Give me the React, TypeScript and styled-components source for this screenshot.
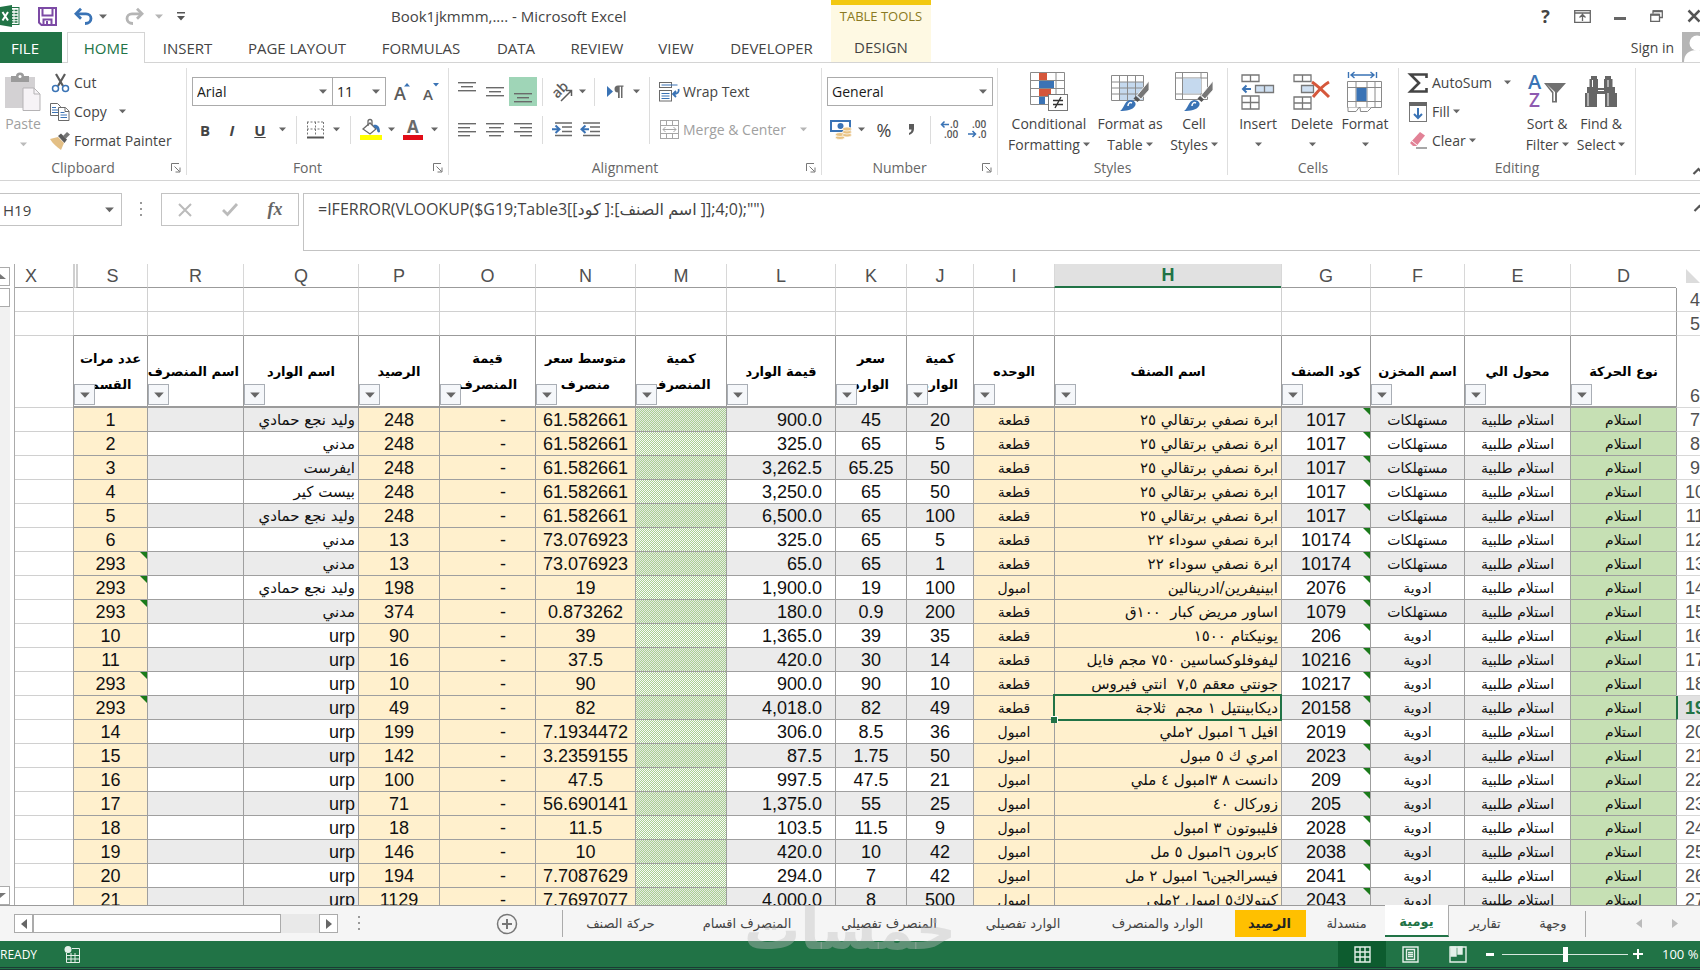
import React from "react";
import styled, { createGlobalStyle, css } from "styled-components";

const UI = `"Open Sans", "Noto Sans", "DejaVu Sans", sans-serif`;
const CELL = `"Liberation Sans", "DejaVu Sans", sans-serif`;
const GREEN = "#217346";
const LINE = "#d4d4d4";
const INK = "#444";

const Global = createGlobalStyle`
  *, *::before, *::after { box-sizing: border-box; }
  html, body { margin: 0; overflow: hidden; }
  body { background: #fff; color: ${INK}; font-family: ${UI}; font-size: 14px; }
  button, input, select, textarea { font: inherit; color: inherit; margin: 0; }
  button { border: 0; background: none; padding: 0; cursor: pointer; }
  svg { display: block; flex: none; overflow: visible; }
`;

/* ---------- shell ---------- */

const Shell = styled.div`
  display: flex;
  flex-direction: column;
  height: 100vh;
  overflow: hidden;
`;

const TitleBar = styled.header`
  display: flex;
  height: 32px;
  flex: none;
`;
const QuickAccess = styled.div`
  display: flex;
  align-items: center;
  width: 391px;
`;
const Title = styled.h1`
  margin: 0;
  width: 440px;
  font-size: 15px;
  font-weight: 400;
  line-height: 32px;
  white-space: nowrap;
`;
const ContextTitle = styled.div`
  width: 100px;
  border-top: 5px solid #f2c811;
  background: #fef9e3;
  color: #8a7a22;
  font-size: 13px;
  line-height: 22px;
  text-align: center;
  white-space: nowrap;
`;
const WindowControls = styled.div`
  display: flex;
  align-items: center;
  margin-left: auto;
  margin-right: -12px;
`;

const Slot = styled.button<{ $w: number; $on?: boolean; $h?: number }>`
  display: flex;
  align-items: center;
  justify-content: center;
  flex: none;
  width: ${(p) => p.$w}px;
  height: ${(p) => p.$h ?? 28}px;
  background: ${(p) => (p.$on ? "#9fd5b7" : "none")};
`;

const TabRow = styled.nav`
  display: flex;
  height: 31px;
  flex: none;
  border-bottom: 1px solid ${LINE};
`;
const Tab = styled.button<{ $w: number; $kind?: "file" | "active" | "context" }>`
  width: ${(p) => p.$w}px;
  flex: none;
  height: 31px;
  font-size: 15px;
  line-height: 24px;
  white-space: nowrap;
  ${(p) =>
    p.$kind === "file" &&
    css`
      background: ${GREEN};
      color: #fff;
      padding-right: 12px;
      margin-right: 5px;
    `}
  ${(p) =>
    p.$kind === "active" &&
    css`
      color: ${GREEN};
      background: #fff;
      border: 1px solid ${LINE};
      border-bottom: 0;
    `}
  ${(p) =>
    p.$kind === "context" &&
    css`
      background: #fef9e3;
      height: 30px;
    `}
`;
const SignIn = styled.a`
  display: flex;
  align-items: center;
  gap: 8px;
  height: 30px;
  margin-left: auto;
  margin-right: -12px;
  color: ${INK};
  text-decoration: none;
  white-space: nowrap;
`;

/* ---------- ribbon ---------- */

const Ribbon = styled.section`
  display: flex;
  flex: none;
  height: 118px;
  padding-top: 5px;
  border-bottom: 1px solid ${LINE};
`;
const Group = styled.div<{ $w: number }>`
  display: flex;
  flex-direction: column;
  flex: none;
  width: ${(p) => p.$w}px;
  height: 107px;
  border-right: 1px solid #dedede;
`;
const GroupBody = styled.div<{ $pad: number }>`
  display: flex;
  flex: 1;
  padding-left: ${(p) => p.$pad}px;
`;
const GroupLabel = styled.div`
  display: flex;
  align-items: center;
  height: 14px;
  color: #666;
  line-height: 14px;
  span {
    flex: 1;
    text-align: center;
  }
`;
const Stack = styled.div<{ $gap?: number; $top?: number }>`
  display: flex;
  flex-direction: column;
  gap: ${(p) => p.$gap ?? 0}px;
  padding-top: ${(p) => p.$top ?? 0}px;
`;
const Line = styled.div`
  display: flex;
  align-items: center;
  height: 29px;
`;
const Divider = styled.i<{ $w: number; $h?: number }>`
  flex: none;
  width: ${(p) => p.$w}px;
  height: ${(p) => p.$h ?? 28}px;
  background: linear-gradient(#dcdcdc, #dcdcdc) center / 1px 100% no-repeat;
`;
const Command = styled.button<{ $dim?: boolean }>`
  display: flex;
  align-items: center;
  height: 29px;
  line-height: 24px;
  white-space: nowrap;
  color: ${(p) => (p.$dim ? "#a0a0a0" : INK)};
`;
const BigButton = styled.button<{ $w: number; $dim?: boolean }>`
  display: flex;
  flex-direction: column;
  align-items: center;
  flex: none;
  width: ${(p) => p.$w}px;
  padding-top: 4px;
  color: ${(p) => (p.$dim ? "#a0a0a0" : INK)};
  line-height: 20px;
  white-space: nowrap;
`;
const BigIcon = styled.span`
  display: flex;
  align-items: center;
  height: 39px;
  margin-bottom: 3px;
`;
const Second = styled.span`
  display: flex;
  align-items: center;
  gap: 3px;
  height: 21px;
`;
const SelectWrap = styled.label<{ $w: number }>`
  position: relative;
  display: block;
  flex: none;
  width: ${(p) => p.$w}px;
  height: 29px;
  & + & {
    margin-left: -1px;
  }
  svg {
    position: absolute;
    right: 6px;
    top: 12px;
    pointer-events: none;
  }
`;
const Select = styled.select`
  appearance: none;
  width: 100%;
  height: 100%;
  padding: 0 4px;
  border: 1px solid #ababab;
  border-radius: 0;
  background: #fff;
  color: #1a1a1a;
`;
const Glyph = styled.span<{ $bold?: boolean; $italic?: boolean; $under?: boolean; $size?: number }>`
  font-family: ${UI};
  font-size: ${(p) => p.$size ?? 15}px;
  font-weight: ${(p) => (p.$bold ? 700 : 400)};
  font-style: ${(p) => (p.$italic ? "italic" : "normal")};
  text-decoration: ${(p) => (p.$under ? "underline" : "none")};
  line-height: 24px;
`;
const FxGlyph = styled.em`
  font-family: "Liberation Serif", serif;
  font-size: 18px;
  font-weight: 700;
  color: #666;
`;
const Collapse = styled.button`
  align-self: flex-end;
  margin-left: auto;
  margin-bottom: 2px;
  width: 8px;
  height: 14px;
`;

/* ---------- formula bar ---------- */

const FormulaBar = styled.section`
  display: flex;
  flex: none;
  height: 83px;
  padding-top: 12px;
`;
const NameBox = styled.div`
  display: flex;
  align-items: center;
  width: 122px;
  height: 33px;
  border: 1px solid #c3c3c3;
  border-left: 0;
  input {
    flex: 1;
    min-width: 0;
    height: 100%;
    border: 0;
    padding: 0 3px;
    outline: 0;
    font-size: 15px;
  }
`;
const Grip = styled.i<{ $w: number }>`
  display: flex;
  align-items: center;
  justify-content: center;
  flex: none;
  width: ${(p) => p.$w}px;
  height: 33px;
`;
const FormulaButtons = styled.div`
  display: flex;
  align-items: center;
  width: 138px;
  height: 33px;
  margin-right: 4px;
  border: 1px solid #c3c3c3;
`;
const Formula = styled.textarea`
  flex: 1;
  height: 58px;
  padding: 4px 14px;
  border: 1px solid #c3c3c3;
  border-right: 0;
  outline: 0;
  resize: none;
  overflow: hidden;
  font-family: "Open Sans", "DejaVu Sans", sans-serif;
  font-size: 16px;
  line-height: 22px;
`;
const FormulaWrap = styled.div`
  display: flex;
  flex: 1;
  position: relative;
  button {
    position: absolute;
    right: 0;
    top: 11px;
    width: 7px;
  }
`;

/* ---------- sheet ---------- */

const SheetArea = styled.main`
  display: flex;
  flex: 1;
  min-height: 0;
  overflow: hidden;
  border-bottom: 1px solid #9b9b9b;
`;
const VScroll = styled.div`
  display: flex;
  flex-direction: column;
  flex: none;
  width: 10px;
  margin-right: 4px;
  padding-top: 3px;
  background: linear-gradient(#fff, #fff) 0 0 / 100% 24px no-repeat, #f1f1f1;
`;
const ScrollBox = styled.button<{ $gap?: number; $push?: boolean }>`
  width: 10px;
  height: 19px;
  flex: none;
  margin-bottom: ${(p) => p.$gap ?? 0}px;
  margin-top: ${(p) => (p.$push ? "auto" : "0")};
  border: 1px solid #ababab;
  border-left: 0;
  background: #fff;
`;
const GridClip = styled.div`
  flex: 1;
  min-width: 0;
  overflow: hidden;
  border-left: 1px solid #ababab;
`;
const Grid = styled.table`
  width: 100%;
  table-layout: fixed;
  border-collapse: separate;
  border-spacing: 0;
  font-family: ${CELL};
  font-size: 18px;
  color: #111;
`;
const ColHead = styled.th<{ $sel?: boolean; $gapLeft?: boolean; $cut?: boolean }>`
  height: 24px;
  padding: 0 ${(p) => (p.$cut ? 26 : 0)}px 0 0;
  font-weight: ${(p) => (p.$sel ? 700 : 400)};
  color: ${(p) => (p.$sel ? GREEN : "#505050")};
  background: ${(p) => (p.$sel ? "#e1e1e1" : "#fff")};
  border-bottom: ${(p) => (p.$sel ? `2px solid ${GREEN}` : "1px solid #9b9b9b")};
  border-left: ${(p) => (p.$gapLeft ? "5px double #cfcfcf" : p.$cut ? "0" : "1px solid #d8d8d8")};
  line-height: 20px;
`;
const Corner = styled.th`
  padding: 0;
  border-left: 1px solid transparent;
  svg {
    margin-left: 4px;
  }
`;
const RowHead = styled.th<{ $sel?: boolean; $bottom?: boolean }>`
  padding: 0;
  direction: ltr;
  font-weight: ${(p) => (p.$sel ? 700 : 400)};
  color: ${(p) => (p.$sel ? GREEN : "#505050")};
  background: ${(p) => (p.$sel ? "#e1e1e1" : "#fff")};
  border-left: ${(p) => (p.$sel ? `2px solid ${GREEN}` : "1px solid #9b9b9b")};
  border-bottom: 1px solid #d8d8d8;
  vertical-align: ${(p) => (p.$bottom ? "bottom" : "middle")};
  span {
    display: block;
    width: 38px;
    text-align: center;
    line-height: 22px;
  }
`;
const Blank = styled.td<{ $strong?: boolean; $edge?: boolean }>`
  height: 24px;
  padding: 0;
  border-left: ${(p) => (p.$edge ? "0" : "1px solid #d0d0d0")};
  border-bottom: 1px solid ${(p) => (p.$strong ? "#9b9b9b" : "#d0d0d0")};
`;
const Field = styled.th`
  position: relative;
  height: 72px;
  padding: 0 4px;
  border-left: 1px solid #9b9b9b;
  border-bottom: 2px solid #9b9b9b;
  font-size: 15px;
  font-weight: 700;
  line-height: 25px;
  text-align: center;
  color: #000;
  white-space: pre;
`;
const Filter = styled.button`
  position: absolute;
  left: 0;
  bottom: 1px;
  display: flex;
  align-items: center;
  justify-content: center;
  width: 21px;
  height: 21px;
  border: 1px solid #a9aeb5;
  background: #f5f7fa;
`;

type Tone = "plain" | "yellow" | "green" | "hatch";
type Align = "center" | "right";

const Cell = styled.td<{
  $tone: Tone;
  $odd: boolean;
  $align: Align;
  $pad: number;
  $flag?: boolean;
  $sel?: boolean;
}>`
  position: relative;
  height: 24px;
  padding: 0 ${(p) => p.$pad}px;
  overflow: ${(p) => (p.$sel ? "visible" : "hidden")};
  white-space: pre;
  line-height: 22px;
  border-left: 1px solid #9f9f9f;
  border-bottom: 1px solid #9f9f9f;
  text-align: ${(p) => p.$align};
  background: ${(p) =>
    p.$tone === "yellow"
      ? "#fff0cd"
      : p.$tone === "green"
      ? "#c6e0b4"
      : p.$tone === "hatch"
      ? `repeating-conic-gradient(#aad092 0 25%, ${p.$odd ? "#e6ebe3" : "#fafafa"} 0 50%) 0 0 / 2px 2px`
      : p.$odd
      ? "#ebebeb"
      : "#fff"};
  ${(p) =>
    p.$flag &&
    css`
      &::before {
        content: "";
        position: absolute;
        top: 0;
        right: 0;
        border-top: 7px solid #1a7a1a;
        border-left: 7px solid transparent;
      }
    `}
  ${(p) =>
    p.$sel &&
    css`
      z-index: 1;
      &::after {
        content: "";
        position: absolute;
        inset: -2px -1px -2px -2px;
        border: 2px solid ${GREEN};
      }
    `}
`;
const FillHandle = styled.i`
  position: absolute;
  z-index: 1;
  left: -4px;
  bottom: -4px;
  width: 7px;
  height: 7px;
  background: ${GREEN};
  border: 1px solid #fff;
  border-left: 0;
  border-bottom: 0;
`;
const Arabic = styled.span<{ $size: number }>`
  font-family: "DejaVu Sans", sans-serif;
  font-size: ${(p) => p.$size}px;
`;

/* ---------- sheet tabs / status ---------- */

const SheetTabs = styled.footer`
  position: relative;
  display: flex;
  align-items: center;
  flex: none;
  height: 35px;
  padding-left: 14px;
  background: #f5f5f5;
`;
const HScroll = styled.div`
  display: flex;
  flex: none;
  width: 324px;
  height: 19px;
  background: #e9e9e9;
`;
const HArrow = styled.button`
  display: flex;
  align-items: center;
  justify-content: center;
  width: 19px;
  border: 1px solid #ababab;
  background: #fff;
`;
const HThumb = styled.div`
  width: 248px;
  border: 1px solid #ababab;
  background: #fff;
  margin-right: auto;
`;
const AddSheet = styled.button`
  flex: none;
  width: 22px;
  margin: 0 44px 0 116px;
`;
const SheetTab = styled.button<{ $w: number; $kind?: "active" | "gold" }>`
  flex: none;
  width: ${(p) => p.$w}px;
  height: 27px;
  font-family: "DejaVu Sans", sans-serif;
  font-size: 13px;
  line-height: 24px;
  white-space: nowrap;
  border-left: 1px solid #ababab;
  ${(p) =>
    p.$kind === "gold" &&
    css`
      background: linear-gradient(#ffc000, #ffc000) 4px 0 / calc(100% - 6px) 100% no-repeat;
      font-weight: 700;
      color: #222;
    `}
  ${(p) =>
    p.$kind === "active" &&
    css`
      align-self: flex-start;
      height: 32px;
      margin-top: -1px;
      padding-top: 4px;
      background: #fff;
      color: ${GREEN};
      font-weight: 700;
      border-right: 1px solid #ababab;
      border-bottom: 2px solid ${GREEN};
      & + & {
        border-left: 0;
      }
    `}
`;
const EndLine = styled.i`
  width: 1px;
  height: 26px;
  background: #ababab;
`;
const TabNav = styled.div`
  display: flex;
  gap: 30px;
  margin-left: auto;
  margin-right: 22px;
`;
const Watermark = styled.div`
  position: absolute;
  left: 744px;
  top: -6px;
  font-family: "DejaVu Sans", sans-serif;
  font-size: 56px;
  font-weight: 700;
  line-height: 60px;
  color: rgba(190, 190, 190, 0.4);
  pointer-events: none;
  z-index: 2;
`;
const StatusBar = styled.footer`
  display: flex;
  align-items: center;
  flex: none;
  height: 29px;
  color: #fff;
  font-size: 12px;
  white-space: nowrap;
  background: ${GREEN};
  border-bottom: 3px double #1b3b34;
`;
const Ready = styled.span`
  width: 64px;
`;
const StatusRight = styled.div`
  display: flex;
  align-items: center;
  margin-left: auto;
`;
const ViewButton = styled.button<{ $on?: boolean }>`
  display: flex;
  align-items: center;
  justify-content: center;
  width: 48px;
  height: 26px;
  background: ${(p) => (p.$on ? "#0d5c2f" : "none")};
`;
const Zoom = styled.input`
  appearance: none;
  width: 126px;
  height: 18px;
  margin: 0 4px;
  background: linear-gradient(#d8e8df, #d8e8df) center / 100% 1px no-repeat;
  &::-webkit-slider-thumb {
    appearance: none;
    width: 5px;
    height: 15px;
    background: #fff;
  }
`;
const ZoomText = styled.span`
  margin-left: 18px;
  width: 38px;
  font-size: 13px;
`;

/* ---------- icons ---------- */

const Caret = ({ c = "#666", s = 8 }: { c?: string; s?: number }) => (
  <svg width={s} height={s / 2 + 1} viewBox="0 0 8 5">
    <path d="M0 0.5h8L4 4.8z" fill={c} />
  </svg>
);
const Launcher = () => (
  <svg width="10" height="10" viewBox="0 0 10 10" fill="none" stroke="#777">
    <path d="M0.5 8V0.5H8M3.5 3.5L8.5 8.5M9 4.5V9H4.5" />
  </svg>
);
const Bars = ({ rows, top = 0, h = 18 }: { rows: [number, number][]; top?: number; h?: number }) => (
  <svg width="18" height={h} viewBox={`0 0 18 ${h}`} fill="#6a6a6a">
    {rows.map(([x, w], i) => (
      <rect key={i} x={x} y={top + i * 4} width={w} height="1.4" />
    ))}
  </svg>
);
const Chevron = () => (
  <svg width="13" height="8" viewBox="0 0 13 8" fill="none" stroke="#555" strokeWidth="2.2">
    <path d="M1.5 7L6.5 2l5 5" />
  </svg>
);
const Dots = () => (
  <svg width="3" height="15" viewBox="0 0 3 15" fill="#999">
    <rect width="2" height="2" />
    <rect y="6" width="2" height="2" />
    <rect y="12" width="2" height="2" />
  </svg>
);
const ExcelLogo = () => (
  <svg width="20" height="22" viewBox="0 0 20 22">
    <rect x="9" y="2.5" width="10" height="17" fill="#fff" stroke={GREEN} />
    <path d="M11 5.5h2.5M14.5 5.5h3M11 8.5h2.5M14.5 8.5h3M11 11.5h2.5M14.5 11.5h3M11 14.5h2.5M14.5 14.5h3M11 17h2.5M14.5 17h3" stroke={GREEN} strokeWidth="1.7" />
    <path d="M0 2L12 0v22L0 20z" fill={GREEN} />
    <path d="M2.500 7l5.500 8.500M8 7l-5.500 8.500" stroke="#fff" strokeWidth="2" />
  </svg>
);
const Save = () => (
  <svg width="19" height="19" viewBox="0 0 19 19" fill="none" stroke="#7c4aa5" strokeWidth="2">
    <path d="M1 1h17v17H3.5L1 15.5z" />
    <path d="M4.5 1v7.5h10V1" />
    <path d="M5.5 18v-5.5h8V18" />
    <path d="M9 14v3" />
  </svg>
);
const Undo = ({ c, flip }: { c: string; flip?: boolean }) => (
  <svg width="19" height="17" viewBox="0 0 19 17" fill="none" stroke={c} strokeWidth="2.8">
    <g transform={flip ? "translate(19 0) scale(-1 1)" : undefined}>
      <path d="M7 0.8L2 5.8l5 5" />
      <path d="M2.5 5.8H12c3 0 5 2 5 4.7S15 15.5 11 15.5" />
    </g>
  </svg>
);
const Scissors = () => (
  <svg width="19" height="20" viewBox="0 0 19 20" fill="none">
    <path d="M5 1l7 12M14 1L7 13" stroke="#5b5b5b" strokeWidth="2.2" />
    <circle cx="4.5" cy="15.5" r="3" stroke="#3a73b5" strokeWidth="1.5" />
    <circle cx="14.5" cy="15.5" r="3" stroke="#3a73b5" strokeWidth="1.5" />
  </svg>
);
const CopyIcon = () => (
  <svg width="20" height="18" viewBox="0 0 20 18" fill="#fff" stroke="#6a6a6a">
    <path d="M0.5 0.5h7l3 3v9h-10z" />
    <path d="M2 4.5h4M2 7h6M2 9.5h6" stroke="#3a73b5" />
    <path d="M8.5 4.5h7l3.5 3.5v9.5H8.5z" />
    <path d="M15 4.5V8.5h4" />
    <path d="M10.5 9.5h4M10.5 12h6.5M10.5 14.5h6.5" stroke="#3a73b5" />
  </svg>
);
const Brush = () => (
  <svg width="20" height="18" viewBox="0 0 20 18">
    <path d="M0 7l8-2 6 6-3 7C7 15 3 12 0 7z" fill="#e3bf85" />
    <path d="M8 4l3-2.5 6 6L14.5 11z" fill="#5b5b5b" />
    <path d="M13 4l4-4 3 2.500-4 4z" fill="#777" />
  </svg>
);
const PasteIcon = () => (
  <svg width="36" height="38" viewBox="0 0 36 38">
    <rect x="0" y="4" width="30" height="31" fill="#d3d1d3" />
    <path d="M6 3h5a4 3.500 0 0 1 8 0h5v6H6z" fill="#9b9b9b" />
    <circle cx="15" cy="3.5" r="1.5" fill="#fff" />
    <path d="M18 15h11l6 6v16.500H18z" fill="#f6f3f6" stroke="#b5b3b5" />
    <path d="M29 15v6h6" fill="none" stroke="#b5b3b5" />
  </svg>
);
const GrowA = ({ up }: { up?: boolean }) => (
  <svg width="18" height="20" viewBox="0 0 18 20">
    <text x="0" y="18" fontFamily="Open Sans" fontWeight="600" fontSize={up ? 18 : 15} fill="#5b5b5b">A</text>
    <path d={up ? "M10 4.500h6l-3-3.500z" : "M10 1h6l-3 3.500z"} fill="#3a73b5" />
  </svg>
);
const BorderIcon = () => (
  <svg width="17" height="18" viewBox="0 0 17 18" fill="none" stroke="#777" strokeDasharray="2 1.5">
    <path d="M0.5 1v14M8.5 1v14M16.5 1v14M0 1h17M0 8h17" />
    <path d="M0 16.500h17" strokeDasharray="none" strokeWidth="2" stroke="#555" />
  </svg>
);
const FillIcon = () => (
  <svg width="22" height="22" viewBox="0 0 22 22">
    <path d="M3 10L10 4l6 6-6 5z" fill="#fff" stroke="#6a6a6a" strokeWidth="1.3" />
    <path d="M8 7V2.500a2 2 0 0 1 4 0V6" fill="none" stroke="#6a6a6a" strokeWidth="1.3" />
    <path d="M13 6c4-1 7 1 7 7-1.500 1-3 0-3-2 0-1-1-2-2-2z" fill="#3a73b5" />
    <rect x="0" y="16" width="22" height="5" fill="#ff0" />
  </svg>
);
const FontColor = () => (
  <svg width="20" height="22" viewBox="0 0 20 22">
    <text x="4" y="14" fontFamily="Open Sans" fontWeight="700" fontSize="17" fill="#6a6a6a">A</text>
    <rect y="16" width="20" height="5" fill="#e10c17" />
  </svg>
);
const Orient = () => (
  <svg width="22" height="20" viewBox="0 0 22 20">
    <text x="2" y="15" transform="rotate(-45 6 12)" fontFamily="Open Sans" fontWeight="600" fontSize="14" fill="#5b5b5b">ab</text>
    <path d="M9 19L19 9M14 8.5h5.5V14" fill="none" stroke="#5b5b5b" strokeWidth="1.5" />
  </svg>
);
const Pilcrow = () => (
  <svg width="17" height="13" viewBox="0 0 17 13">
    <path d="M0 1l6 5.5L0 12z" fill="#3a73b5" />
    <path d="M11 13V7.500a3.500 3.500 0 0 1 0-7h5.500v1.300H15.500V13h-1.500V1.800h-1.300V13z" fill="#6a6a6a" />
  </svg>
);
const Indent = ({ out }: { out?: boolean }) => (
  <svg width="21" height="15" viewBox="0 0 21 15">
    <path d="M3 1h17M10 5h10M10 9.5h10M3 13.5h17" stroke="#6a6a6a" strokeWidth="1.4" />
    <path d={out ? "M9 7.2H2M5.5 3.5L1.5 7.2l4 3.7" : "M0 7.2h7M3.5 3.5l4 3.7-4 3.7"} stroke="#3a73b5" strokeWidth="2" fill="none" />
  </svg>
);
const WrapIcon = () => (
  <svg width="21" height="20" viewBox="0 0 21 20" fill="none" stroke="#6a6a6a">
    <rect x="0.5" y="0.5" width="12" height="5" />
    <rect x="0.5" y="8.5" width="12" height="10.5" />
    <path d="M2.5 3h16M2.5 11.5h8M2.5 14h8M2.5 16.5h8" stroke="#3a73b5" strokeWidth="1.2" />
    <path d="M19.5 7c1 3-1 5-5 5M17 9l-3 3 3 3" stroke="#3a73b5" strokeWidth="1.8" />
  </svg>
);
const MergeIcon = () => (
  <svg width="19" height="19" viewBox="0 0 19 19" fill="none" stroke="#a6a6a6">
    <rect x="0.5" y="0.5" width="18" height="18" />
    <path d="M0.5 5.5h18M0.5 13.5h18M6.5 0.5v5M12.5 0.5v5M6.5 13.5v5M12.5 13.5v5M3 9.5h13M5.5 7l-2.5 2.5L5.5 12M13.5 7l2.5 2.5-2.5 2.5" />
  </svg>
);
const Currency = () => (
  <svg width="22" height="20" viewBox="0 0 22 20">
    <rect x="1" y="1" width="19" height="10" fill="#fff" stroke="#3a73b5" strokeWidth="2" />
    <circle cx="10.5" cy="6" r="3" fill="#3a73b5" />
    <g fill="#e8c283" stroke="#fff" strokeWidth="0.7">
      <ellipse cx="10" cy="17.5" rx="4.5" ry="2" />
      <ellipse cx="10" cy="14.5" rx="4.5" ry="2" />
      <ellipse cx="17" cy="15" rx="4.5" ry="2" />
      <ellipse cx="17" cy="12" rx="4.5" ry="2" />
      <ellipse cx="17" cy="9" rx="4.5" ry="2" />
    </g>
  </svg>
);
const Decimal = ({ less }: { less?: boolean }) => (
  <svg width="21" height="19" viewBox="0 0 21 19" fontFamily="Open Sans" fontWeight="600" fontSize="10" fill="#555">
    <text x={less ? 4 : 10} y="8">{less ? ".00" : ".0"}</text>
    <text x={less ? 10 : 4} y="18">{less ? ".0" : ".00"}</text>
    <path d={less ? "M0 14h7M4.5 11l3 3-3 3" : "M9 4.5H1.5M4.5 1.5l-3 3 3 3"} fill="none" stroke="#3a73b5" strokeWidth="1.5" />
  </svg>
);
const CondIcon = () => (
  <svg width="38" height="39" viewBox="0 0 38 39">
    <path d="M0.5 0.5h34v32h-34zM0.5 8.5h34M0.5 16.5h34M0.5 24.5h34M9.5 0.5v32M26 0.5v32" fill="#fff" stroke="#8a8a8a" />
    <rect x="9" y="1" width="8" height="7" fill="#d5573b" />
    <rect x="9" y="9" width="15" height="7" fill="#3a73b5" />
    <rect x="9" y="17" width="12" height="7" fill="#d5573b" />
    <rect x="9" y="25" width="6" height="7" fill="#3a73b5" />
    <rect x="18.5" y="22.5" width="19" height="16" fill="#fff" stroke="#777" />
    <path d="M23 28.5h10M23 32.5h10M31 25l-6 11" stroke="#333" strokeWidth="1.4" />
  </svg>
);
const PaintTable = ({ cell }: { cell?: boolean }) => (
  <svg width="38" height="39" viewBox="0 0 38 39">
    {cell ? (
      <>
        <path d="M0.5 0.5h32v27h-32zM0.5 6h32M0.5 22h32M7.5 0.5v27M26 0.5v27" fill="#fff" stroke="#8a8a8a" />
        <rect x="8" y="6.5" width="18" height="15" fill="#c5d9ee" />
      </>
    ) : (
      <>
        <rect x="0.5" y="3.5" width="32" height="25" fill="#fff" />
        <rect x="8" y="10" width="24" height="18" fill="#c5d9ee" />
        <path d="M0.5 3.5h32v25h-32zM0.5 10h32M0.5 16h32M0.5 22h32M8.5 3.5v25M16.5 3.5v25M24.5 3.5v25" fill="none" stroke="#8a8a8a" />
      </>
    )}
    <path d="M38 9v9L30 27l-4-3.5z" fill="#777" stroke="#fff" strokeWidth="0.8" />
    <path d="M25 24l4 3.5-2.500 2.500-4-3.500z" fill="#555" />
    <path d="M9 39c4-2 4-10 10-11 4 0 7 3 5 6-2 4-9 5-15 5z" fill="#3a73b5" />
    <path d="M17 34c0-3 2-4 4-3" fill="none" stroke="#fff" strokeWidth="1.5" />
  </svg>
);
const InsertIcon = () => (
  <svg width="34" height="36" viewBox="0 0 34 36" fill="#fff" stroke="#777" strokeWidth="1.3">
    <path d="M1 1h17v6.5H1zM9.5 1v6.5M1 22h17v13H1zM1 28.5h17M9.5 22v13" />
    <path d="M14.5 11.5h18v7h-18zM23.5 11.5v7" fill="#cfe0f2" />
    <path d="M10 15H2.5M5.5 11.5L2 15l3.5 3.5" stroke="#3a73b5" strokeWidth="2" fill="none" />
  </svg>
);
const DeleteIcon = () => (
  <svg width="38" height="36" viewBox="0 0 38 36" fill="#fff" stroke="#777" strokeWidth="1.3">
    <path d="M1 1h17v6.5H1zM9.5 1v6.5M1 23h17v12H1zM1 29h17M9.5 23v12" />
    <path d="M8.5 11.5h12v7h-12z" fill="#cfe0f2" />
    <path d="M19 8c6 4 11 9 17 15M36 8c-7 4-11 9-16 15" stroke="#d5573b" strokeWidth="3" fill="none" />
  </svg>
);
const FormatIcon = () => (
  <svg width="36" height="40" viewBox="0 0 36 40" fill="#fff" stroke="#8a8a8a">
    <path d="M1.5 0v6M29.5 0v6M4 3h23M7.5 0L4 3l3.5 3M23.5 0l3.5 3-3.5 3" stroke="#3a73b5" fill="none" strokeWidth="1.4" />
    <path d="M0.5 9.5h34v26h-34zM0.5 15.5h34M0.5 29.5h34M9 9.5v26M20 9.5v26M28 9.5v26" />
    <rect x="9.5" y="16" width="10" height="13" fill="#3a73b5" stroke="none" />
    <path d="M1 35.5v4h8l3-4M13 35.5l0.5 4h7l4-4" />
  </svg>
);
const Sigma = () => (
  <svg width="20" height="20" viewBox="0 0 20 20" fill="none" stroke="#444" strokeWidth="2.6">
    <path d="M18.5 5V1.5H2.5L11 10l-8.5 8.5h16V15" />
  </svg>
);
const FillDown = () => (
  <svg width="18" height="20" viewBox="0 0 18 20" fill="none">
    <rect x="0.5" y="0.5" width="17" height="19" stroke="#777" />
    <rect width="18" height="4" fill="#666" />
    <path d="M9 6v10M5 12l4 4 4-4" stroke="#3a73b5" strokeWidth="2" />
  </svg>
);
const Eraser = () => (
  <svg width="19" height="17" viewBox="0 0 19 17">
    <path d="M1 11L11 0l5 3.5L7.5 14H4z" fill="#e28296" />
    <path d="M3 9l5.5 4.5" stroke="#fff" />
    <path d="M7 16h11" stroke="#777" strokeWidth="1.3" />
  </svg>
);
const SortIcon = () => (
  <svg width="38" height="36" viewBox="0 0 38 36">
    <text x="0" y="15" fontFamily="Open Sans" fontWeight="600" fontSize="20" fill="#3a73b5">A</text>
    <text x="1" y="33" fontFamily="Open Sans" fontWeight="600" fontSize="19" fill="#8e5ab0">Z</text>
    <path d="M16 9h22l-9 10v9.5h-5V19z" fill="#707070" />
    <path d="M18.5 10l7 8v9h1.5v-9z" fill="#fff" />
  </svg>
);
const Binoculars = () => (
  <svg width="34" height="32" viewBox="0 0 34 32" fill="#666">
    <path d="M7 0h6v3h1v9h6V3h1V0h6v3h1.5v8H31v6h2v14H21V18h-8v13H1V17h2v-6h2.5V3H7z" />
    <path d="M4 17v13M24 17v13M8.5 4v7M24 4v7M14 14.5h6" stroke="#fff" />
  </svg>
);

/* ---------- data ---------- */

type Col = {
  id: string;
  w?: number;
  title?: string;
  tone: Tone;
  align: Align;
  pad: number;
  text?: number;
};
const COLS: Col[] = [
  { id: "D", w: 106, title: "نوع الحركة", tone: "green", align: "center", pad: 2 },
  { id: "E", w: 106, title: "محول الي", tone: "plain", align: "center", pad: 2 },
  { id: "F", w: 94, title: "اسم المخزن", tone: "plain", align: "center", pad: 2 },
  { id: "G", w: 89, title: "كود الصنف", tone: "plain", align: "center", pad: 2 },
  { id: "H", w: 227, title: "اسم الصنف", tone: "yellow", align: "right", pad: 3, text: 15 },
  { id: "I", w: 81, title: "الوحده", tone: "yellow", align: "center", pad: 2 },
  { id: "J", w: 67, title: "كمية\nالوارد", tone: "plain", align: "center", pad: 0 },
  { id: "K", w: 71, title: "سعر\nالوارد", tone: "plain", align: "center", pad: 0 },
  { id: "L", w: 109, title: "قيمة الوارد", tone: "plain", align: "right", pad: 13 },
  { id: "M", w: 91, title: "كمية\nالمنصرف", tone: "hatch", align: "center", pad: 0 },
  { id: "N", w: 100, title: "متوسط سعر\nمنصرف", tone: "yellow", align: "center", pad: 0 },
  { id: "O", w: 96, title: "قيمة\nالمنصرف", tone: "yellow", align: "right", pad: 29 },
  { id: "P", w: 81, title: "الرصيد", tone: "yellow", align: "center", pad: 0 },
  { id: "Q", w: 115, title: "اسم الوارد", tone: "plain", align: "right", pad: 3, text: 15 },
  { id: "R", w: 96, title: "اسم المنصرف", tone: "plain", align: "right", pad: 3 },
  { id: "S", w: 74, title: "عدد مرات\nالقسم", tone: "yellow", align: "center", pad: 0 },
  { id: "X", tone: "plain", align: "center", pad: 0 },
];

const IN = "استلام";
const REQ = "استلام طلبية";
const SUP = "مستهلكات";
const MED = "ادوية";
const PC = "قطعة";
const AMP = "امبول";
const WALID = "وليد نجع حمادي";
const MADANI = "مدني";

/* F, G, H, I, J, K, L, N, P, Q, S */
const DATA: string[][] = [
  [SUP, "1017", "ابرة نصفي برتقالي ٢٥", PC, "20", "45", "900.0", "61.582661", "248", WALID, "1"],
  [SUP, "1017", "ابرة نصفي برتقالي ٢٥", PC, "5", "65", "325.0", "61.582661", "248", MADANI, "2"],
  [SUP, "1017", "ابرة نصفي برتقالي ٢٥", PC, "50", "65.25", "3,262.5", "61.582661", "248", "ايفرست", "3"],
  [SUP, "1017", "ابرة نصفي برتقالي ٢٥", PC, "50", "65", "3,250.0", "61.582661", "248", "بيست كير", "4"],
  [SUP, "1017", "ابرة نصفي برتقالي ٢٥", PC, "100", "65", "6,500.0", "61.582661", "248", WALID, "5"],
  [SUP, "10174", "ابرة نصفي سوداء ٢٢", PC, "5", "65", "325.0", "73.076923", "13", MADANI, "6"],
  [SUP, "10174", "ابرة نصفي سوداء ٢٢", PC, "1", "65", "65.0", "73.076923", "13", MADANI, "293"],
  [MED, "2076", "ابينيفرين/ادرينالين", AMP, "100", "19", "1,900.0", "19", "198", WALID, "293"],
  [SUP, "1079", "اساور مريض كبار  ١٠٠ق", PC, "200", "0.9", "180.0", "0.873262", "374", MADANI, "293"],
  [MED, "206", "يونيكتام ١٥٠٠", PC, "35", "39", "1,365.0", "39", "90", "urp", "10"],
  [MED, "10216", "ليفوفلوكساسين ٧٥٠ مجم فايل", PC, "14", "30", "420.0", "37.5", "16", "urp", "11"],
  [MED, "10217", "جونتي معقم ٧,٥  انتي فيروس", PC, "10", "90", "900.0", "90", "10", "urp", "293"],
  [MED, "20158", "ديكابينتيل ١ مجم  ثلاجة", PC, "49", "82", "4,018.0", "82", "49", "urp", "293"],
  [MED, "2019", "افيل ٦ امبول ٢ملي", AMP, "36", "8.5", "306.0", "7.1934472", "199", "urp", "14"],
  [MED, "2023", "امري ك ٥ مبول", AMP, "50", "1.75", "87.5", "3.2359155", "142", "urp", "15"],
  [MED, "209", "دانست ٨ ٣امبول ٤ ملي", AMP, "21", "47.5", "997.5", "47.5", "100", "urp", "16"],
  [MED, "205", "زوركال ٤٠", AMP, "25", "55", "1,375.0", "56.690141", "71", "urp", "17"],
  [MED, "2028", "فليبوتون ٣ امبول", AMP, "9", "11.5", "103.5", "11.5", "18", "urp", "18"],
  [MED, "2038", "كابرون ٦امبول ٥ مل", AMP, "42", "10", "420.0", "10", "146", "urp", "19"],
  [MED, "2041", "فيسرالجين٦ امبول ٢ مل", AMP, "42", "7", "294.0", "7.7087629", "194", "urp", "20"],
  [MED, "2043", "كيتولاك٥ امبول ٢ملي", AMP, "500", "8", "4,000.0", "7.7697077", "1129", "urp", "21"],
];
const ORDER = ["F", "G", "H", "I", "J", "K", "L", "N", "P", "Q", "S"];

const valueOf = (row: string[], id: string) => {
  if (id === "D") return IN;
  if (id === "E") return REQ;
  if (id === "O") return "-";
  const i = ORDER.indexOf(id);
  return i < 0 ? "" : row[i];
};
const isArabic = (t: string) => /[\u0600-\u06ff]/.test(t);

const RIBBON_TABS: [string, number][] = [
  ["INSERT", 85],
  ["PAGE LAYOUT", 134],
  ["FORMULAS", 114],
  ["DATA", 76],
  ["REVIEW", 86],
  ["VIEW", 72],
  ["DEVELOPER", 119],
];
const SHEETS: [string, number, ("active" | "gold")?][] = [
  ["حركة الصنف", 116],
  ["المنصرف اقسام", 138],
  ["المنصرف تفصيلي", 146],
  ["الوارد تفصيلي", 122],
  ["الوارد والمنصرف", 147],
  ["الرصيد", 77, "gold"],
  ["منسدلة", 77],
  ["يومية", 64, "active"],
  ["تقارير", 72],
  ["وجهة", 64],
];
const FORMULA = '=IFERROR(VLOOKUP($G19;Table3[[كود\u200e ]:[اسم الصنف\u200e ]];4;0);"")';

const Combo = ({ label, value, w }: { label: string; value: string; w: number }) => (
  <SelectWrap $w={w}>
    <Select aria-label={label} defaultValue={value}>
      <option>{value}</option>
    </Select>
    <Caret />
  </SelectWrap>
);
const Label = ({ children, launch }: { children: string; launch?: boolean }) => (
  <GroupLabel>
    <span>{children}</span>
    {launch && (
      <Slot $w={20} $h={14} aria-label={`${children} settings`}>
        <Launcher />
      </Slot>
    )}
  </GroupLabel>
);
const Big = ({
  w,
  icon,
  first,
  second,
  dim,
}: {
  w: number;
  icon: React.ReactNode;
  first: string;
  second?: string;
  dim?: boolean;
}) => (
  <BigButton $w={w} $dim={dim}>
    <BigIcon>{icon}</BigIcon>
    {first}
    <Second>
      {second}
      <Caret s={7} c={dim ? "#bbb" : "#666"} />
    </Second>
  </BigButton>
);

const Sheet = () => (
  <Grid dir="rtl">
    <colgroup>
      <col style={{ width: 24 }} />
      {COLS.map((c) => (
        <col key={c.id} style={c.w ? { width: c.w } : undefined} />
      ))}
    </colgroup>
    <thead>
      <tr>
        <Corner>
          <svg width="14" height="14" viewBox="0 0 14 14">
            <path d="M0 0v14h14z" fill="#dcdcdc" />
          </svg>
        </Corner>
        {COLS.map((c) => (
          <ColHead key={c.id} $sel={c.id === "H"} $gapLeft={c.id === "S"} $cut={c.id === "X"}>
            {c.id}
          </ColHead>
        ))}
      </tr>
    </thead>
    <tbody>
      {[4, 5].map((n) => (
        <tr key={n}>
          <RowHead>
            <span>{n}</span>
          </RowHead>
          {COLS.map((c) => (
            <Blank key={c.id} $strong={n === 5 && c.id !== "X"} $edge={c.id === "X"} />
          ))}
        </tr>
      ))}
      <tr>
        <RowHead $bottom>
          <span>6</span>
        </RowHead>
        {COLS.map((c) =>
          c.title ? (
            <Field key={c.id}>
              <Arabic $size={13}>{c.title}</Arabic>
              <Filter aria-label={`Filter ${c.title}`}>
                <Caret s={10} />
              </Filter>
            </Field>
          ) : (
            <Blank key={c.id} $edge />
          )
        )}
      </tr>
      {DATA.map((row, r) => (
        <tr key={r}>
          <RowHead $sel={r === 12}>
            <span>{r + 7}</span>
          </RowHead>
          {COLS.map((c) => {
            if (c.id === "X") return <Blank key={c.id} $edge />;
            const v = valueOf(row, c.id);
            const sel = r === 12 && c.id === "H";
            return (
              <Cell
                key={c.id}
                $tone={c.tone}
                $odd={r % 2 === 0}
                $align={c.align}
                $pad={c.pad}
                $sel={sel}
                $flag={c.id === "G" || (c.id === "S" && v === "293")}
              >
                {isArabic(v) ? <Arabic $size={c.text ?? 14}>{v}</Arabic> : v}
                {sel && <FillHandle />}
              </Cell>
            );
          })}
        </tr>
      ))}
    </tbody>
  </Grid>
);

export default function App() {
  return (
    <Shell>
      <Global />
      <TitleBar>
        <QuickAccess>
          <ExcelLogo />
          <Slot $w={54} aria-label="Save"><Save /></Slot>
          <Slot $w={19} aria-label="Undo"><Undo c="#3a73b5" /></Slot>
          <Slot $w={20} aria-label="Undo list"><Caret /></Slot>
          <Slot $w={42} aria-label="Redo"><Undo c="#b5b5b5" flip /></Slot>
          <Slot $w={8} aria-label="Redo list"><Caret c="#b5b5b5" /></Slot>
          <Slot $w={36} aria-label="Customize">
            <svg width="8" height="9" viewBox="0 0 8 9"><path d="M0 0h8v1.5H0zM0 4h8L4 8.5z" fill="#555" /></svg>
          </Slot>
        </QuickAccess>
        <Title>Book1jkmmm,.... - Microsoft Excel</Title>
        <ContextTitle>TABLE TOOLS</ContextTitle>
        <WindowControls>
          <Slot $w={37} aria-label="Help"><Glyph $bold $size={18}>?</Glyph></Slot>
          <Slot $w={37} aria-label="Ribbon display options">
            <svg width="17" height="13" viewBox="0 0 17 13" fill="none" stroke="#666" strokeWidth="1.3"><path d="M0.7 0.7h15.6v11.6H0.7zM0.7 3h15.6M8.5 11V5M5.5 7.5l3-3 3 3" /></svg>
          </Slot>
          <Slot $w={37} aria-label="Minimize">
            <svg width="12" height="7" viewBox="0 0 12 7"><rect y="4" width="12" height="3" fill="#666" /></svg>
          </Slot>
          <Slot $w={37} aria-label="Restore">
            <svg width="13" height="12" viewBox="0 0 13 12" fill="none" stroke="#666" strokeWidth="1.3"><path d="M3 3.5V1h9.3v6.5H9.5M0.7 4.5h8.8v6.8H0.7z" /><path d="M3 1.3h9.3M0.7 4.8h8.8" strokeWidth="2" /></svg>
          </Slot>
          <Slot $w={37} aria-label="Close">
            <svg width="14" height="12" viewBox="0 0 14 12" stroke="#555" strokeWidth="2.5"><path d="M1.5 0.5l11 11M12.5 0.5l-11 11" /></svg>
          </Slot>
        </WindowControls>
      </TitleBar>

      <TabRow>
        <Tab $w={62} $kind="file">FILE</Tab>
        <Tab $w={78} $kind="active">HOME</Tab>
        {RIBBON_TABS.map(([t, w]) => (
          <Tab key={t} $w={w}>{t}</Tab>
        ))}
        <Tab $w={100} $kind="context">DESIGN</Tab>
        <SignIn href="#signin">
          Sign in
          <svg width="30" height="30" viewBox="0 0 30 30"><rect width="30" height="30" fill="#b5b5b5" /><circle cx="15" cy="11" r="7.5" fill="#fff" /><path d="M2 30c0-8 5-12 13-12s13 4 13 12z" fill="#fff" /></svg>
        </SignIn>
      </TabRow>

      <Ribbon>
        <Group $w={187}>
          <GroupBody $pad={0}>
            <Big w={46} dim icon={<PasteIcon />} first="Paste" />
            <Stack>
              <Command><Slot as="span" $w={28}><Scissors /></Slot>Cut</Command>
              <Command><Slot as="span" $w={28}><CopyIcon /></Slot>Copy<Slot as="span" $w={32}><Caret s={7} /></Slot></Command>
              <Command><Slot as="span" $w={28}><Brush /></Slot>Format Painter</Command>
            </Stack>
          </GroupBody>
          <Label launch>Clipboard</Label>
        </Group>

        <Group $w={262}>
          <GroupBody $pad={5}>
            <Stack $gap={9} $top={9}>
              <Line>
                <Combo label="Font" value="Arial" w={141} />
                <Combo label="Font size" value="11" w={54} />
                <Slot $w={34} aria-label="Grow font"><GrowA up /></Slot>
                <Slot $w={24} aria-label="Shrink font"><GrowA /></Slot>
              </Line>
              <Line>
                <Slot $w={26}><Glyph $bold>B</Glyph></Slot>
                <Slot $w={28}><Glyph $bold $italic>I</Glyph></Slot>
                <Slot $w={28}><Glyph $bold $under>U</Glyph></Slot>
                <Slot $w={16} aria-label="Underline list"><Caret s={7} /></Slot>
                <Divider $w={12} />
                <Slot $w={27} aria-label="Borders"><BorderIcon /></Slot>
                <Slot $w={14} aria-label="Border list"><Caret s={7} /></Slot>
                <Divider $w={14} />
                <Slot $w={27} aria-label="Fill color"><FillIcon /></Slot>
                <Slot $w={14} aria-label="Fill color list"><Caret s={7} /></Slot>
                <Slot $w={30} aria-label="Font color"><FontColor /></Slot>
                <Slot $w={12} aria-label="Font color list"><Caret s={7} /></Slot>
              </Line>
            </Stack>
          </GroupBody>
          <Label launch>Font</Label>
        </Group>

        <Group $w={373}>
          <GroupBody $pad={4}>
            <Stack $gap={9} $top={9}>
              <Line>
                <Slot $w={28} aria-label="Top align"><Bars rows={[[0, 18], [3, 12], [0, 18]]} h={20} /></Slot>
                <Slot $w={28} aria-label="Middle align"><Bars rows={[[0, 18], [3, 12], [0, 18]]} top={5} h={20} /></Slot>
                <Slot $w={28} $h={29} $on aria-label="Bottom align"><Bars rows={[[0, 18], [3, 12], [0, 18]]} top={11} h={20} /></Slot>
                <Divider $w={11} />
                <Slot $w={29} aria-label="Orientation"><Orient /></Slot>
                <Slot $w={10} aria-label="Orientation list"><Caret s={7} /></Slot>
                <Divider $w={15} />
                <Slot $w={27} aria-label="Text direction"><Pilcrow /></Slot>
                <Slot $w={14} aria-label="Text direction list"><Caret s={7} /></Slot>
              </Line>
              <Line>
                <Slot $w={28} aria-label="Align left"><Bars rows={[[0, 18], [0, 12], [0, 18], [0, 12]]} h={14} /></Slot>
                <Slot $w={28} aria-label="Center"><Bars rows={[[0, 18], [3, 12], [0, 18], [3, 12]]} h={14} /></Slot>
                <Slot $w={28} aria-label="Align right"><Bars rows={[[0, 18], [6, 12], [0, 18], [6, 12]]} h={14} /></Slot>
                <Divider $w={11} />
                <Slot $w={28} aria-label="Increase indent"><Indent /></Slot>
                <Slot $w={28} aria-label="Decrease indent"><Indent out /></Slot>
              </Line>
            </Stack>
            <Stack $top={9}><Divider $w={12} $h={67} /></Stack>
            <Stack $gap={9} $top={9}>
              <Command><Slot as="span" $w={28}><WrapIcon /></Slot>Wrap Text</Command>
              <Command $dim><Slot as="span" $w={28}><MergeIcon /></Slot>Merge &amp; Center<Slot as="span" $w={36}><Caret c="#b5b5b5" s={7} /></Slot></Command>
            </Stack>
          </GroupBody>
          <Label launch>Alignment</Label>
        </Group>

        <Group $w={176}>
          <GroupBody $pad={5}>
            <Stack $gap={9} $top={9}>
              <Combo label="Number format" value="General" w={166} />
              <Line>
                <Slot $w={28} aria-label="Currency"><Currency /></Slot>
                <Slot $w={12} aria-label="Currency list"><Caret s={7} /></Slot>
                <Slot $w={34}><Glyph $size={18}>%</Glyph></Slot>
                <Slot $w={20} aria-label="Comma style">
                  <svg width="7" height="11" viewBox="0 0 7 11"><path d="M1 0h5v5c0 3-2 5-5 6V9c2-1 2.500-2 2.500-3.500H1z" fill="#5b5b5b" /></svg>
                </Slot>
                <Divider $w={18} />
                <Slot $w={22} aria-label="Increase decimal"><Decimal /></Slot>
                <Slot $w={34} aria-label="Decrease decimal"><Decimal less /></Slot>
              </Line>
            </Stack>
          </GroupBody>
          <Label launch>Number</Label>
        </Group>

        <Group $w={230}>
          <GroupBody $pad={5}>
            <Big w={92} icon={<CondIcon />} first="Conditional" second="Formatting" />
            <Big w={70} icon={<PaintTable />} first="Format as" second="Table" />
            <Big w={58} icon={<PaintTable cell />} first="Cell" second="Styles" />
          </GroupBody>
          <Label>Styles</Label>
        </Group>

        <Group $w={171}>
          <GroupBody $pad={3}>
            <Big w={54} icon={<InsertIcon />} first="Insert" />
            <Big w={54} icon={<DeleteIcon />} first="Delete" />
            <Big w={52} icon={<FormatIcon />} first="Format" />
          </GroupBody>
          <Label>Cells</Label>
        </Group>

        <Group $w={237}>
          <GroupBody $pad={5}>
            <Stack>
              <Command><Slot as="span" $w={28}><Sigma /></Slot>AutoSum<Slot as="span" $w={30}><Caret s={7} /></Slot></Command>
              <Command><Slot as="span" $w={28}><FillDown /></Slot>Fill<Slot as="span" $w={13}><Caret s={7} /></Slot></Command>
              <Command><Slot as="span" $w={28}><Eraser /></Slot>Clear<Slot as="span" $w={13}><Caret s={7} /></Slot></Command>
            </Stack>
            <Big w={50} icon={<SortIcon />} first="Sort &amp;" second="Filter" />
            <Big w={58} icon={<Binoculars />} first="Find &amp;" second="Select" />
          </GroupBody>
          <Label>Editing</Label>
        </Group>
        <Collapse aria-label="Collapse the ribbon"><Chevron /></Collapse>
      </Ribbon>

      <FormulaBar>
        <NameBox>
          <input aria-label="Name box" defaultValue="H19" />
          <Slot $w={24} aria-label="Names"><Caret s={9} /></Slot>
        </NameBox>
        <Grip $w={39}><Dots /></Grip>
        <FormulaButtons>
          <Slot $w={45} aria-label="Cancel"><svg width="14" height="12" viewBox="0 0 14 12" stroke="#bbb" strokeWidth="2"><path d="M1 0l12 12M13 0L1 12" /></svg></Slot>
          <Slot $w={45} aria-label="Enter"><svg width="16" height="13" viewBox="0 0 16 13" stroke="#bbb" strokeWidth="2.8" fill="none"><path d="M1 7l4.5 4.5L15 1" /></svg></Slot>
          <Slot $w={46} aria-label="Insert function"><FxGlyph>fx</FxGlyph></Slot>
        </FormulaButtons>
        <FormulaWrap>
          <Formula aria-label="Formula" dir="ltr" defaultValue={FORMULA} />
          <button aria-label="Collapse formula bar"><Chevron /></button>
        </FormulaWrap>
      </FormulaBar>

      <SheetArea>
        <VScroll>
          <ScrollBox $gap={2} aria-label="Scroll up"><svg width="6" height="5" viewBox="0 0 6 5"><path d="M0 0l6 5H0z" fill="#777" /></svg></ScrollBox>
          <ScrollBox aria-label="Scroll thumb" />
          <ScrollBox $push aria-label="Scroll down"><svg width="6" height="5" viewBox="0 0 6 5"><path d="M0 0h6L0 5z" fill="#777" /></svg></ScrollBox>
        </VScroll>
        <GridClip>
          <Sheet />
        </GridClip>
      </SheetArea>

      <SheetTabs>
        <HScroll>
          <HArrow aria-label="Scroll left"><svg width="6" height="10" viewBox="0 0 6 10"><path d="M6 0v10L0 5z" fill="#666" /></svg></HArrow>
          <HThumb />
          <HArrow aria-label="Scroll right"><svg width="6" height="10" viewBox="0 0 6 10"><path d="M0 0v10l6-5z" fill="#666" /></svg></HArrow>
        </HScroll>
        <Grip $w={42}><Dots /></Grip>
        <AddSheet aria-label="New sheet">
          <svg width="22" height="22" viewBox="0 0 22 22" fill="none" stroke="#777" strokeWidth="1.5"><circle cx="11" cy="11" r="9.5" /><path d="M11 6v10M6 11h10" strokeWidth="2" /></svg>
        </AddSheet>
        {SHEETS.map(([t, w, k]) => (
          <SheetTab key={t} $w={w} $kind={k} dir="rtl">{t}</SheetTab>
        ))}
        <EndLine />
        <TabNav>
          <svg width="6" height="9" viewBox="0 0 6 9"><path d="M6 0v9L0 4.5z" fill="#bbb" /></svg>
          <svg width="6" height="9" viewBox="0 0 6 9"><path d="M0 0v9l6-4.5z" fill="#bbb" /></svg>
        </TabNav>
        <Watermark>خمسات</Watermark>
      </SheetTabs>

      <StatusBar>
        <Ready>READY</Ready>
        <svg width="16" height="17" viewBox="0 0 16 17" fill="none" stroke="#e4f0e9"><path d="M2.5 7v9.5h13v-14H8M2.5 9.5h13M2.5 13h13M7 7v9.5M11 7v9.5" /><circle cx="4" cy="3.5" r="3.5" fill="#e4f0e9" stroke="none" /></svg>
        <StatusRight>
          <ViewButton $on aria-label="Normal view"><svg width="17" height="17" viewBox="0 0 17 17" fill="none" stroke="#e4f0e9" strokeWidth="1.4"><path d="M1 1h15v15H1zM6 1v15M11 1v15M1 6h15M1 11h15" /></svg></ViewButton>
          <ViewButton aria-label="Page layout view"><svg width="17" height="17" viewBox="0 0 17 17" fill="none" stroke="#e4f0e9" strokeWidth="1.4"><path d="M1 1h15v15H1zM4.5 3.5h8v10h-8zM6 6.5h5M6 8.5h5M6 10.5h5" /></svg></ViewButton>
          <ViewButton aria-label="Page break view"><svg width="18" height="17" viewBox="0 0 18 17" fill="none" stroke="#e4f0e9" strokeWidth="1.4"><path d="M1 1h16v15H1z" /><path d="M2 1h5v9H2zM9 1h4v7H9z" fill="#e4f0e9" /></svg></ViewButton>
          <Slot $w={16} aria-label="Zoom out"><svg width="8" height="3"><rect width="8" height="3" fill="#fff" /></svg></Slot>
          <Zoom type="range" aria-label="Zoom" min={0} max={100} defaultValue={50} />
          <Slot $w={12} aria-label="Zoom in"><svg width="10" height="10" viewBox="0 0 10 10"><path d="M4 0h2v4h4v2H6v4H4V6H0V4h4z" fill="#fff" /></svg></Slot>
          <ZoomText>100 %</ZoomText>
        </StatusRight>
      </StatusBar>
    </Shell>
  );
}
